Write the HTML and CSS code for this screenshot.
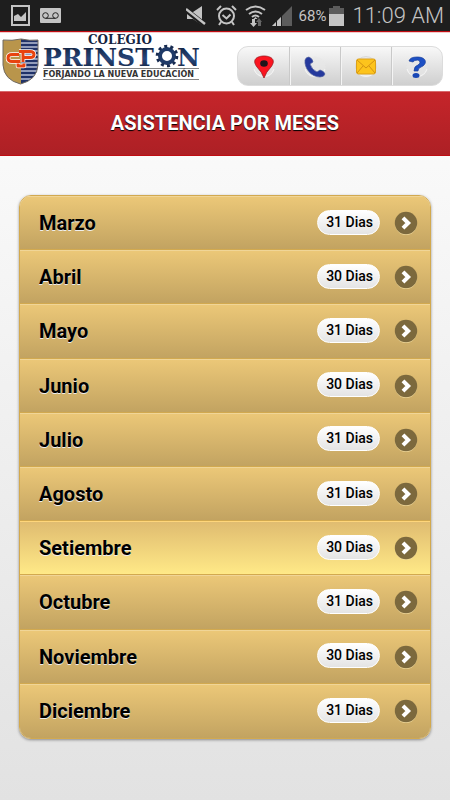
FILE: index.html
```html
<!DOCTYPE html>
<html lang="es">
<head>
<meta charset="utf-8">
<meta name="viewport" content="width=device-width, initial-scale=1">
<title>Asistencia por meses</title>
<link rel="stylesheet" href="styles.css">
</head>
<body>
<div class="status">
  <div class="status-group notices">
    <svg width="19" height="21" viewBox="0 0 19 21"><rect x="1" y="1" width="17" height="19" fill="none" stroke="#c4c4c4" stroke-width="2"/><path d="M3 16V11l4-2 3 3 5-5v9z" fill="#c4c4c4"/></svg>
    <svg width="21" height="15" viewBox="0 0 21 15"><rect width="21" height="15" rx="1" fill="#c4c4c4"/><g fill="none" stroke="#222" stroke-width="1"><circle cx="5.500" cy="7.500" r="2.800"/><circle cx="15.500" cy="7.500" r="2.800"/><path d="M5.500 10.300h10"/></g></svg>
  </div>
  <div class="status-group signals">
    <svg width="20" height="20" viewBox="0 0 20 20"><path d="M1 6h6l9-6v19L7 13H1z" fill="#c4c4c4"/><path d="M0 4l19 15" stroke="#1e1e1e" stroke-width="5"/><path d="M0 3l19 15" stroke="#c4c4c4" stroke-width="2.400"/></svg>
    <svg class="alarm" width="21" height="21" viewBox="0 0 21 21" fill="none" stroke="#c4c4c4" stroke-width="2"><circle cx="10.500" cy="11" r="7.500"/><path d="M6.500 10l4 3.500 4-4M5 17l-2 3M16 17l2 3M1 5l4-4M20 5l-4-4"/></svg>
    <svg class="wifi" width="21" height="22" viewBox="0 0 21 22"><g fill="none" stroke="#c4c4c4" stroke-width="2"><path d="M1 5q9.500-7 19 0M4 9q6.500-5 13 0M7 12q3.500-3 7 0"/></g><path d="M10.500 12l2 2h-4z" fill="#c4c4c4"/><path d="M7 14h3v4h2l-3.500 4L5 18h2z" fill="#c4c4c4"/><path d="M13 21v-4h-2l3-4 3 4h-1v4z" fill="#666"/></svg>
    <svg class="cell" width="20" height="20" viewBox="0 0 20 20"><path d="M0 20L20 0v20z" fill="#5c5c5c"/><path d="M0 20L4 16v4zM5 20v-5l4-4v9z" fill="#c4c4c4"/><path d="M4.500 15v5M9.500 10v10" stroke="#1e1e1e"/></svg>
    <span class="percent">68%</span>
    <svg class="battery" width="15" height="20" viewBox="0 0 15 20"><path d="M4 0h7v2h4v6H0V2h4z" fill="#5c5c5c"/><path d="M0 8h15v12H0z" fill="#c4c4c4"/></svg>
    <time class="clock">11:09 AM</time>
  </div>
</div>

<header class="header">
  <a class="brand" href="#">
    <svg width="202" height="54" viewBox="0 0 202 54" role="img" aria-label="Colegio Prinston">
      <defs>
        <linearGradient id="navy" x1="0" y1="0" x2="0" y2="1"><stop offset="0" stop-color="#0c1930"/><stop offset=".55" stop-color="#28477c"/><stop offset="1" stop-color="#0c1930"/></linearGradient>
        <clipPath id="shield"><path d="M3 8q9 1 18-1 9 2 17 1v25q-1 15-17.500 19Q4 48 3 33z"/></clipPath>
      </defs>
      <g clip-path="url(#shield)"><path d="M2 6h19v48H2z" fill="#b9954b"/><path d="M21 6h19v48H21z" fill="#203268"/><path d="M21 11h18M21 15h18M21 19h18M21 23h18M21 27h18M21 31h18M21 35h18M21 39h18M21 43h18M21 47h18" stroke="#b6bfd3" stroke-width="1.300"/></g>
      <path d="M3 8q9 1 18-1 9 2 17 1v25q-1 15-17.500 19Q4 48 3 33z" fill="none" stroke="#716b62"/>
      <g fill="none" stroke-linejoin="round">
        <path d="M19 22.500h-7q-4 0-4 3.500t4 3.500h8M19 19.500h11q4 0 4 3t-4 3h-6M23 21v9M18 31.500v2.500h6v-2.500" stroke="#fff" stroke-width="4.500"/>
        <path d="M19 22.500h-7q-4 0-4 3.500t4 3.500h8M19 19.500h11q4 0 4 3t-4 3h-6M23 21v9M18 31.500v2.500h6v-2.500" stroke="#e8430f" stroke-width="3"/>
      </g>
      <text class="logo-top" x="88" y="12">COLEGIO</text>
      <text class="logo-name" x="43" y="34">PRINST</text>
      <text class="logo-name" x="177" y="34">N</text>
      <circle cx="167" cy="24" r="7" fill="none" stroke="#1f3a68" stroke-width="4"/>
      <circle cx="167" cy="24" r="9.800" fill="none" stroke="#172b50" stroke-width="3" stroke-dasharray="3 3.157"/>
      <path d="M43 36.500h156M43 47.500h156" stroke="#858585"/>
      <text class="logo-motto" x="43" y="45">FORJANDO LA NUEVA EDUCACIÓN</text>
    </svg>
  </a>
  <nav class="tools">
    <a href="#" aria-label="Ubicación"><svg width="24" height="24" viewBox="0 0 24 24"><circle cx="12" cy="12" r="10.500" fill="#e8e8e8" fill-opacity=".6"/><path d="M2 14a10.500 10.500 0 0 0 20 0" fill="none" stroke="#f6f6f6"/><path d="M12 23Q10 17 5 12C-1 4 6 1 12 1s13 3 7 11q-5 5-7 11z" fill="#fb1420" stroke="#9c2026" stroke-width=".8"/><ellipse cx="12" cy="8.500" rx="3.800" ry="3.200" fill="#20151b"/></svg></a>
    <a href="#" aria-label="Teléfono"><svg width="24" height="24" viewBox="0 0 24 24"><circle cx="12" cy="12" r="10.500" fill="#e8e8e8" fill-opacity=".6"/><path d="M2 14a10.500 10.500 0 0 0 20 0" fill="none" stroke="#f6f6f6"/><path d="M2 5q1-3 4-3 4 2 4 5L7 9q2 6 7 8l3-2q4 1 5 4-1 3-5 3C8 22 1 13 2 5z" fill="#25399d" stroke="#53639f" stroke-width=".7"/></svg></a>
    <a href="#" aria-label="Correo"><svg width="24" height="24" viewBox="0 0 24 24"><circle cx="12" cy="12" r="10.500" fill="#e8e8e8" stroke="#d9d9d9"/><path d="M2 14a10.500 10.500 0 0 0 20 0" fill="none" stroke="#f6f6f6"/><rect x="2.500" y="4" width="19" height="15" rx="2" fill="#fdc41c" stroke="#dca11b"/><path d="M3 5l9 8 9-8M3 18l6-7M21 18l-6-7" fill="none" stroke="#d39213"/></svg></a>
    <a href="#" aria-label="Ayuda"><svg width="24" height="24" viewBox="0 0 24 24"><circle cx="12" cy="12" r="10.500" fill="#e8e8e8" fill-opacity=".6"/><path d="M2 14a10.500 10.500 0 0 0 20 0" fill="none" stroke="#f6f6f6"/><path d="M4 6q1-4 8-4c11 0 10 8 4 10q-3 1-3 4H9q0-5 4-6 4-3 0-5-4 0-5 2z" fill="#1d50c4" stroke="#1a3f99" stroke-width=".7"/><ellipse cx="11" cy="20.500" rx="3.500" ry="2.500" fill="#1847b5"/></svg></a>
  </nav>
</header>

<h1 class="title">ASISTENCIA POR MESES</h1>

<main class="content">
  <ul class="months">
    <li><a href="#"><span class="month">Marzo</span><span class="days">31 Dias</span><svg class="go" viewBox="0 0 24 24"><use href="#arrow"/></svg></a></li>
    <li><a href="#"><span class="month">Abril</span><span class="days">30 Dias</span><svg class="go" viewBox="0 0 24 24"><use href="#arrow"/></svg></a></li>
    <li><a href="#"><span class="month">Mayo</span><span class="days">31 Dias</span><svg class="go" viewBox="0 0 24 24"><use href="#arrow"/></svg></a></li>
    <li><a href="#"><span class="month">Junio</span><span class="days">30 Dias</span><svg class="go" viewBox="0 0 24 24"><use href="#arrow"/></svg></a></li>
    <li><a href="#"><span class="month">Julio</span><span class="days">31 Dias</span><svg class="go" viewBox="0 0 24 24"><use href="#arrow"/></svg></a></li>
    <li><a href="#"><span class="month">Agosto</span><span class="days">31 Dias</span><svg class="go" viewBox="0 0 24 24"><use href="#arrow"/></svg></a></li>
    <li class="active"><a href="#"><span class="month">Setiembre</span><span class="days">30 Dias</span><svg class="go" viewBox="0 0 24 24"><use href="#arrow"/></svg></a></li>
    <li><a href="#"><span class="month">Octubre</span><span class="days">31 Dias</span><svg class="go" viewBox="0 0 24 24"><use href="#arrow"/></svg></a></li>
    <li><a href="#"><span class="month">Noviembre</span><span class="days">30 Dias</span><svg class="go" viewBox="0 0 24 24"><use href="#arrow"/></svg></a></li>
    <li><a href="#"><span class="month">Diciembre</span><span class="days">31 Dias</span><svg class="go" viewBox="0 0 24 24"><use href="#arrow"/></svg></a></li>
  </ul>
</main>
<svg width="0" height="0" class="symbols"><symbol id="arrow" viewBox="0 0 24 24"><circle cx="12" cy="12.900" r="11" fill="#f0d99b"/><circle cx="12" cy="12" r="11.200" fill="#7c693d"/><path d="M9 6.800l5.200 5.200L9 17.200" fill="none" stroke="#fff" stroke-width="4"/></symbol></svg>
</body>
</html>
```
FILE: styles.css
```css
* { box-sizing: border-box; }

body {
  margin: 0;
  min-height: 100vh;
  display: flex;
  flex-direction: column;
  font-family: Roboto, "Liberation Sans", sans-serif;
  color: #000;
  background: linear-gradient(#fff, #e2e2e2);
}

a { color: inherit; text-decoration: none; }
svg { display: block; flex: none; }
.symbols { position: absolute; }

.status {
  display: flex;
  justify-content: space-between;
  align-items: center;
  height: 32px;
  padding: 0 6px 0 11px;
  background: #1e1e1e;
  border-bottom: 1px solid #c00c12;
  color: #c4c4c4;
}
.status-group { display: flex; align-items: center; }
.notices { gap: 10px; }
.alarm { margin-left: 10px; }
.wifi { margin-left: 8px; }
.cell { margin-left: 6px; }
.percent { margin-left: 7px; font-size: 15px; }
.battery { margin-left: 3px; }
.clock { margin-left: 8px; font-size: 22px; font-weight: 300; line-height: 30px; }

.header {
  display: flex;
  justify-content: space-between;
  align-items: flex-start;
  height: 59px;
  padding: 0 7px 0 0;
  background: #fff;
  box-shadow: inset 0 1px #f3c9ca;
}
.logo-top { font: bold 12px "DejaVu Serif", serif; fill: #14233f; }
.logo-name { font: bold 25px "DejaVu Serif", serif; fill: url(#navy); }
.logo-motto { font: bold 8px "DejaVu Sans", sans-serif; fill: #333; }

.tools {
  display: grid;
  grid-template-columns: repeat(4, 51px);
  height: 40px;
  margin-top: 14px;
  border: 1px solid #dcdcdc;
  border-radius: 11px;
  background: linear-gradient(#f8f8f8, #cfcfcf);
  overflow: hidden;
}
.tools a { display: flex; align-items: center; justify-content: center; padding-top: 2px; }
.tools a + a { border-left: 1px solid #c9c9c9; box-shadow: inset 1px 0 #f4f4f4; }

.title {
  margin: 0;
  padding: 20px 0;
  font-size: 20px;
  line-height: 23px;
  font-weight: 700;
  text-align: center;
  color: #fff;
  text-shadow: 0 1px 1px #000;
  background: linear-gradient(#c5252a, #ad2025);
  border-top: 1px solid #d8696c;
  border-bottom: 1px solid #c00c12;
}

.content { padding: 39px 19px 60px; }

.months {
  display: grid;
  grid-auto-rows: 1fr;
  min-height: 544px;
  margin: 0;
  padding: 0;
  list-style: none;
  border: 1px solid #d2a94f;
  border-radius: 12px;
  overflow: hidden;
  box-shadow: 0 1px 3px rgba(0, 0, 0, .4);
}
.months li { display: grid; }
.months a {
  display: flex;
  align-items: center;
  padding: 1px 12px 0 19px;
  background: linear-gradient(#ecc878, #c2a361);
  box-shadow: inset 0 1px #f0d597;
  border-bottom: 1px solid #d2a94f;
  text-shadow: 0 1px 0 #eee;
}
.months li:last-child a { border-bottom: 0; }
.months .active a {
  background: linear-gradient(#dfbb70, #ffe987);
  box-shadow: inset 0 1px #ffd67a;
}
.month { flex: 1; font-size: 20px; line-height: 26px; font-weight: 700; }
.days {
  margin: 0 14px 2px 0;
  padding: 0 6px 0 8px;
  font-size: 14px;
  line-height: 23px;
  font-weight: 500;
  border: 1px solid #fff;
  border-radius: 13px;
  background: linear-gradient(#fff, #e4e4e4);
}
.go { width: 24px; height: 24px; }
```
